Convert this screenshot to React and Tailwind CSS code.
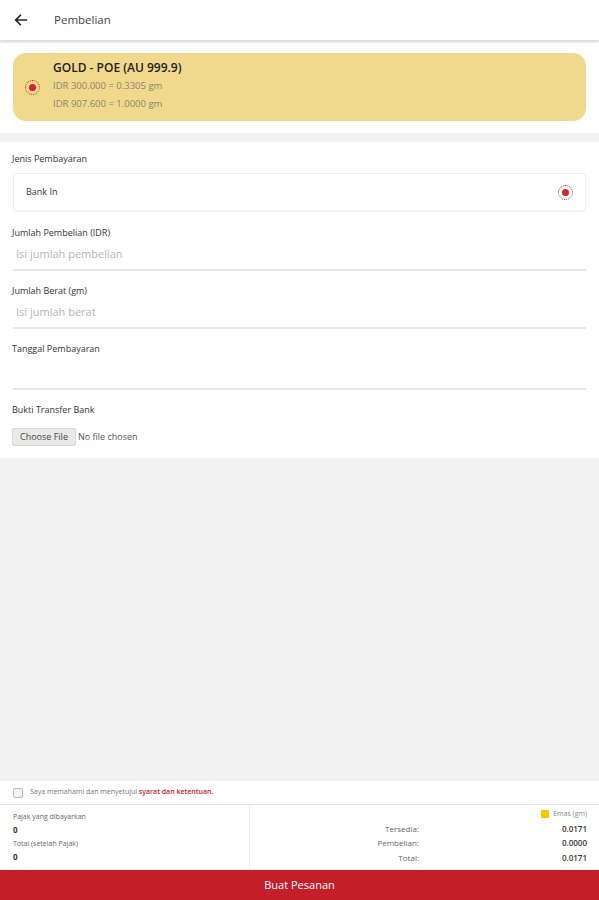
import React from "react";

const Radio = ({ className = "" }) => (
  <span className={`flex items-center justify-center w-[15px] h-[15px] rounded-full border-[1.5px] border-dotted border-[#d0242e] ${className}`}>
    <span className="w-[7px] h-[7px] rounded-full bg-[#d0242e]" />
  </span>
);

const Field = ({ label, placeholder, tall }) => (
  <div className="pt-[14px]">
    <div className="text-[9px] text-[#333] leading-[12px]">{label}</div>
    <div className={`mx-px ${tall ? "h-[35px]" : "h-[32px]"} border-b-2 border-[#e6e6e6] flex items-center pl-[3px] text-[11px] text-[#b5b5b5]`}>
      {placeholder}
    </div>
  </div>
);

const App = () => {
  return (
    <div className="w-[599px] h-[900px] bg-[#f2f2f2] flex flex-col font-['Open_Sans',sans-serif] text-[#333]">
      {/* header */}
      <div className="h-[40px] bg-white flex items-center shadow-[0_1px_3px_rgba(0,0,0,0.15)] relative z-10 shrink-0">
        <svg width="16" height="16" viewBox="0 0 24 24" className="ml-[13px]" fill="none" stroke="#222" strokeWidth="2.4" strokeLinecap="square">
          <path d="M20 12H5M11 5l-7 7 7 7" />
        </svg>
        <span className="ml-[25px] text-[11.5px] text-[#444]">Pembelian</span>
      </div>

      {/* product card */}
      <div className="mt-[3px] bg-white px-[13px] pt-[10px] pb-[12px] shrink-0">
        <div className="h-[68px] bg-[#f0d98c] rounded-[13px] flex items-center pl-[12px]">
          <Radio />
          <div className="ml-[13px] -mt-[1px]">
            <div className="text-[12px] font-semibold text-[#222] leading-[16px]">GOLD - POE (AU 999.9)</div>
            <div className="text-[9.5px] text-[#8c8470] leading-[18px] mt-[1px]">IDR 300.000 = 0.3305 gm</div>
            <div className="text-[9.5px] text-[#8c8470] leading-[18px]">IDR 907.600 = 1.0000 gm</div>
          </div>
        </div>
      </div>

      {/* form */}
      <div className="mt-[9px] bg-white px-[12px] pt-[11px] pb-[12px] shrink-0">
        <div className="text-[9px] leading-[12px]">Jenis Pembayaran</div>
        <div className="mt-[8px] mx-px h-[38px] border border-[#eee] rounded-[3px] shadow-[0_1px_2px_rgba(0,0,0,0.06)] flex items-center justify-between pl-[12px] pr-[12px]">
          <span className="text-[9px] text-[#333]">Bank In</span>
          <Radio />
        </div>
        <div className="pt-[2px]">
          <Field label="Jumlah Pembelian (IDR)" placeholder="Isi jumlah pembelian" />
        </div>
        <Field label="Jumlah Berat (gm)" placeholder="Isi jumlah berat" />
        <Field label="Tanggal Pembayaran" placeholder="" tall />
        <div className="pt-[14px]">
          <div className="text-[9px] leading-[12px]">Bukti Transfer Bank</div>
          <div className="mt-[12px] flex items-center">
            <span className="h-[18px] px-[7px] bg-[#e9e9e9] border border-[#d6d6d6] rounded-[2px] text-[9px] text-[#444] flex items-center">Choose File</span>
            <span className="ml-[2px] text-[9px] text-[#555]">No file chosen</span>
          </div>
        </div>
      </div>

      <div className="flex-1" />

      {/* footer */}
      <div className="bg-white shrink-0">
        <div className="h-[24px] flex items-center pl-[13px] border-b border-[#e6e6e6]">
          <span className="w-[10px] h-[10px] border border-[#bbb] rounded-[2px] bg-[#f4f4f4]" />
          <span className="ml-[7px] text-[7px] text-[#777]">
            Saya memahami dan menyetujui <span className="text-[#c41e2a] font-semibold">syarat dan ketentuan.</span>
          </span>
        </div>
        <div className="h-[65px] flex">
          <div className="w-[250px] border-r border-[#eee] pl-[13px] pt-[7px]">
            <div className="text-[7px] text-[#666] leading-[10px]">Pajak yang dibayarkan</div>
            <div className="text-[8px] font-bold leading-[16px]">0</div>
            <div className="text-[7px] text-[#666] leading-[10px] mt-[1px]">Total (setelah Pajak)</div>
            <div className="text-[8px] font-bold leading-[16px]">0</div>
          </div>
          <div className="flex-1 pr-[12px] pt-[4px]">
            <div className="flex justify-end items-center">
              <span className="w-[8px] h-[8px] bg-[#f7c600] rounded-[1px]" />
              <span className="ml-[4px] text-[7px] text-[#888]">Emas (gm)</span>
            </div>
            <div className="grid grid-cols-[1fr_168px] text-[8px] leading-[14.5px] mt-[2px]">
              <span className="text-right text-[#666]">Tersedia:</span>
              <span className="text-right font-semibold">0.0171</span>
              <span className="text-right text-[#666]">Pembelian:</span>
              <span className="text-right font-semibold">0.0000</span>
              <span className="text-right text-[#666]">Total:</span>
              <span className="text-right font-semibold">0.0171</span>
            </div>
          </div>
        </div>
        <div className="h-[30px] bg-[#c41e2a] flex items-center justify-center text-white text-[11px]">Buat Pesanan</div>
      </div>
    </div>
  );
};

export default App;
